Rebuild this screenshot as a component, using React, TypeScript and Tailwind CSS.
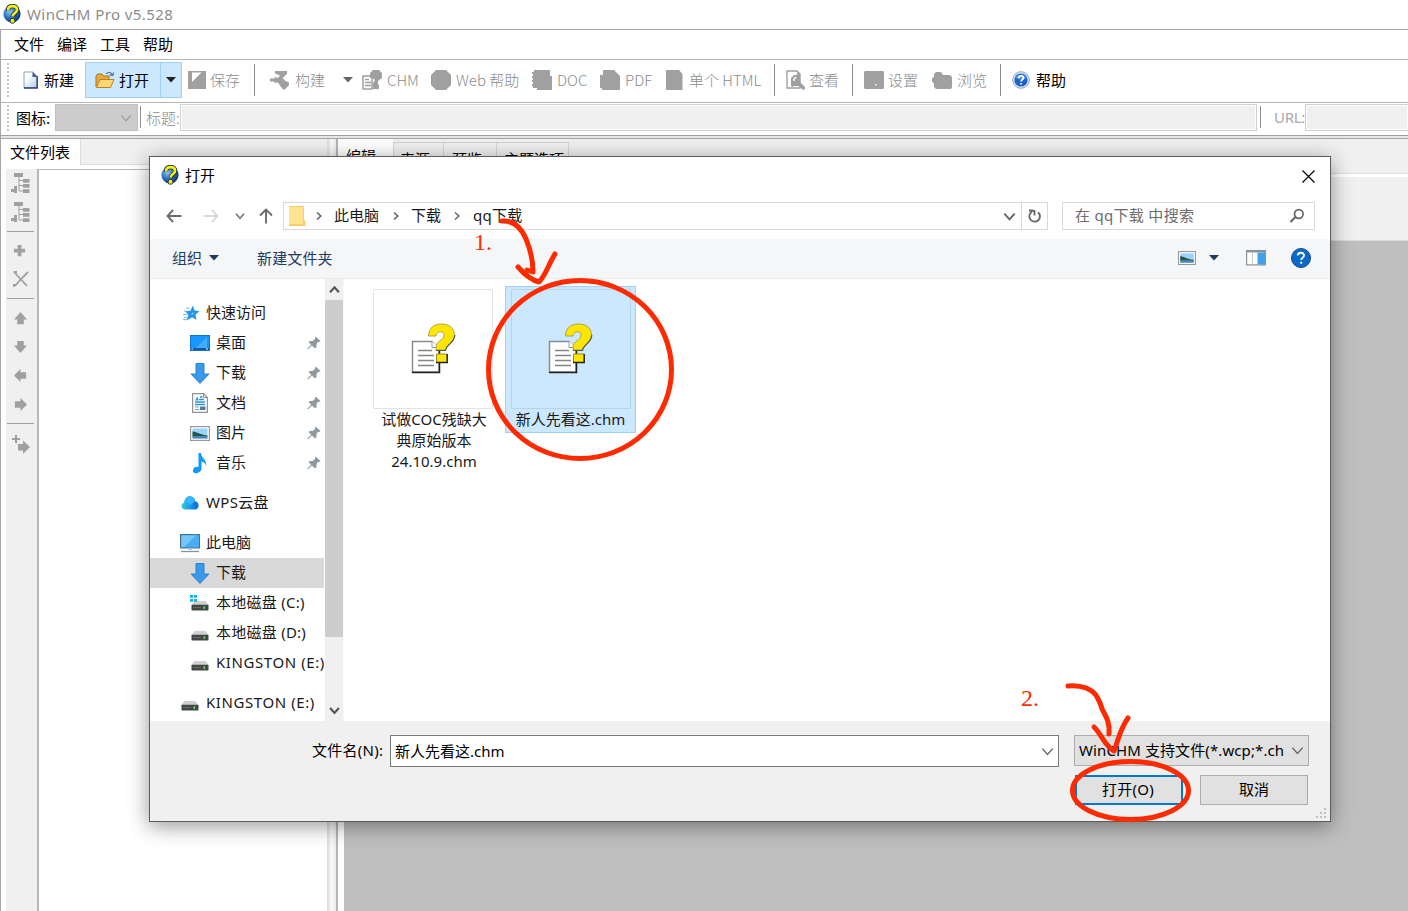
import type { ReactNode } from "react";

const ui = "font-['Noto_Sans','Noto_Sans_CJK_SC',sans-serif]";
const cjk = "font-['Noto_Sans_CJK_SC',sans-serif]";

type IconProps = { className?: string };

function AppLogo({ className = "" }: IconProps) {
  return (
    <svg className={className} width="18" height="20" viewBox="0 0 18 20">
      <defs>
        <radialGradient id="globe" cx="35%" cy="35%" r="70%">
          <stop offset="0" stopColor="#8fc3f5" />
          <stop offset="0.5" stopColor="#2f74c4" />
          <stop offset="1" stopColor="#0d3277" />
        </radialGradient>
      </defs>
      <circle cx="9" cy="10" r="8.6" fill="url(#globe)" />
      <path d="M5.2 6.6C4.6 3.2 7 2 9.5 2c3 0 4.700 1.600 4.700 3.900 0 3-4.200 3.300-4.400 7" fill="none" stroke="#263a3a" strokeWidth="4.400" />
      <path d="M5.200 6.400C4.600 3.200 7 2.200 9.500 2.200c3 0 4.500 1.500 4.500 3.700 0 3-4.200 3.300-4.400 6.600" fill="none" stroke="#f3ee13" strokeWidth="2.700" />
      <rect x="7.200" y="14.500" width="4.600" height="4.600" rx="1.500" fill="#f3ee13" stroke="#263a3a" strokeWidth="1" />
    </svg>
  );
}

function NewIcon() {
  return (
    <svg width="16" height="18" viewBox="0 0 16 18">
      <defs>
        <linearGradient id="sheet" x1="0" x2="1" y1="0" y2="1">
          <stop offset="0.3" stopColor="#fff" />
          <stop offset="1" stopColor="#b5cbe4" />
        </linearGradient>
      </defs>
      <path d="M1 1H10L14 5.500V16.500H1Z" fill="url(#sheet)" stroke="#8aa0bd" />
      <path d="M14.200 5V17H1" fill="none" stroke="#27456e" strokeWidth="1.400" />
      <path d="M9.500 1V6H14.500Z" fill="#3f5d86" />
    </svg>
  );
}

function OpenIcon() {
  return (
    <svg width="20" height="18" viewBox="0 0 20 18">
      <path d="M1 16V5L2.500 3H7L8.500 5H14V8" fill="#e3aa3d" stroke="#a9731c" />
      <path d="M1.500 16.500L5 8.500H19L15.500 16.500Z" fill="#fcd674" stroke="#bb8320" />
      <path d="M11 3C13 .5 16 .7 17.500 4M18.800 1.500L17.700 4.600L14.500 3.800" fill="none" stroke="#52749c" strokeWidth="1.200" />
    </svg>
  );
}

function SaveIcon() {
  return (
    <svg width="18" height="18" viewBox="0 0 18 18">
      <path d="M0 0H18V18H0Z" fill="#a0a0a0" />
      <path d="M4 1.500H13.500L4 11Z" fill="#fff" />
    </svg>
  );
}

function BuildIcon() {
  return (
    <svg width="20" height="19" viewBox="0 0 20 19" fill="#a0a0a0">
      <path d="M5 0H17V3L12.500 7L15.500 10L19 11.500V14L15 18.500H13L10 14.500L8 11.500L4.500 12V10.500H0V7.500H4.500V6L8 7L10 4.500L5 2.500Z" />
    </svg>
  );
}

function ChmIcon() {
  return (
    <svg width="20" height="20" viewBox="0 0 20 20">
      <path d="M1 6H10V19H1Z" fill="#fff" stroke="#a0a0a0" strokeWidth="1.500" />
      <path d="M3 9.500H7M3 12.500H9M3 15.500H9" stroke="#a0a0a0" strokeWidth="1.300" />
      <path d="M8 3L11 0H17L20 3V8L16 11V14L17 15V19H11V13L13 10L10 8H8Z" fill="#a0a0a0" />
    </svg>
  );
}

function WebIcon() {
  return (
    <svg width="20" height="20" viewBox="0 0 20 20" fill="#a0a0a0">
      <path d="M5 0H15L20 5V15L15 20H5L0 15V5Z" />
    </svg>
  );
}

function DocIcon() {
  return (
    <svg width="20" height="20" viewBox="0 0 20 20" fill="#a0a0a0">
      <path d="M2 0H18V6H20V20H5V18H1V16H0V14H1V12H0V10H1V8H0V6H1V4H0V2H2Z" />
    </svg>
  );
}

function PdfIcon() {
  return (
    <svg width="20" height="20" viewBox="0 0 20 20" fill="#a0a0a0">
      <path d="M3 0H14L20 6V20H2V18H0V5H3Z" />
    </svg>
  );
}

function HtmlIcon() {
  return (
    <svg width="17" height="20" viewBox="0 0 17 20" fill="#a0a0a0">
      <path d="M0 0H13L16.500 4V20H0Z" />
    </svg>
  );
}

function ViewIcon() {
  return (
    <svg width="20" height="20" viewBox="0 0 20 20">
      <path d="M1 1H11L14 4V18H1Z" fill="#fff" stroke="#a0a0a0" strokeWidth="1.400" />
      <path d="M5 16V8L8 5H11V2L14 4V12L19 17V19L17 20L13 16H8L6 17Z" fill="#a0a0a0" />
      <path d="M8 11V9L10 7" fill="none" stroke="#fff" strokeWidth="1.500" />
    </svg>
  );
}

function SettingsIcon() {
  return (
    <svg width="20" height="18" viewBox="0 0 20 18">
      <path d="M1 0H19L20 1V17L19 18H1L0 17V1Z" fill="#a0a0a0" />
      <rect x="11" y="13" width="1.500" height="1.500" fill="#fff" />
    </svg>
  );
}

function BrowseIcon() {
  return (
    <svg width="20" height="17" viewBox="0 0 20 17" fill="#a0a0a0">
      <path d="M2 2L4 0H9L11 3H18L20 5V15L19 17H4L2 15V12L0 9V6L2 5Z" />
    </svg>
  );
}

function HelpBall() {
  return (
    <svg width="18" height="18" viewBox="0 0 18 18">
      <circle cx="9" cy="9" r="8.300" fill="#dfe8f1" stroke="#8fa5bd" />
      <circle cx="9" cy="9" r="6.600" fill="#1b63c8" />
      <path d="M3.500 7A6 6 0 0 1 14.500 7Q9 10 3.500 7" fill="#5b9be6" />
      <path d="M6.700 7C6.700 3.800 11.600 4.200 11.400 7C11.300 8.600 9.200 8.700 9.100 10.500M9.100 12V13.600" fill="none" stroke="#fff" strokeWidth="1.700" />
    </svg>
  );
}

function Caret({ color = "#666", className = "" }: { color?: string; className?: string }) {
  return (
    <svg className={className} width="10" height="6" viewBox="0 0 10 6">
      <path d="M0 0H10L5 5.600Z" fill={color} />
    </svg>
  );
}

function Chevron({ dir, size = 10, color = "#666", weight = 1.600 }: { dir: "up" | "down" | "right"; size?: number; color?: string; weight?: number }) {
  const d = { up: "M1 7.500L5 3L9 7.500", down: "M1 2.800L5 7.200L9 2.800", right: "M3 1.500L6.800 5L3 8.500" }[dir];
  return (
    <svg width={size} height={size} viewBox="0 0 10 10">
      <path d={d} fill="none" stroke={color} strokeWidth={weight} />
    </svg>
  );
}

function Tool({ width, iconWidth, icon, label, active }: { width: string; iconWidth: string; icon: ReactNode; label: string; active?: boolean }) {
  return (
    <div className={`flex h-[36px] shrink-0 items-center ${width}`}>
      <span className={`shrink-0 ${iconWidth}`}>{icon}</span>
      <span className={`whitespace-nowrap ${active ? "text-black" : "font-light text-[#8c8c8c]"}`}>{label}</span>
    </div>
  );
}

function Divider({ margin }: { margin: string }) {
  return <div className={`h-[32px] w-px shrink-0 bg-[#8c8c8c] ${margin}`} />;
}

function Grip({ count, className }: { count: number; className: string }) {
  return (
    <div className={`flex w-[3px] shrink-0 flex-col gap-[2px] ${className}`}>
      {Array.from({ length: count }, (_, i) => (
        <span key={i} className="size-[2px] bg-[#c4c4c4]" />
      ))}
    </div>
  );
}

function Toolbar() {
  return (
    <div className={`flex h-[43px] shrink-0 items-start border-b border-[#b4b4b4] pt-[2px] text-[15px] leading-[20px] ${cjk}`}>
      <Grip count={9} className="ml-[7px] mr-[13px] mt-[1px]" />
      <Tool width="w-[62px]" iconWidth="w-[21px]" icon={<NewIcon />} label="新建" active />
      <div className="flex h-[36px] w-[97px] shrink-0 items-center border border-[#99d1ff] bg-[#cce8ff]">
        <span className="ml-[9px] w-[24px]"><OpenIcon /></span>
        <span className="w-[41px] text-black">打开</span>
        <span className="flex h-full grow items-center justify-center border-l border-[#99d1ff]"><Caret color="#222" /></span>
      </div>
      <Tool width="ml-[6px] w-[66px]" iconWidth="w-[22px]" icon={<SaveIcon />} label="保存" />
      <Divider margin="mt-[2px]" />
      <Tool width="ml-[15px] w-[73px]" iconWidth="w-[25px]" icon={<BuildIcon />} label="构建" />
      <div className="flex h-[36px] w-[19px] shrink-0 items-center"><Caret /></div>
      <Tool width="w-[69px]" iconWidth="w-[25px]" icon={<ChmIcon />} label="CHM" />
      <Tool width="w-[101px]" iconWidth="w-[25px]" icon={<WebIcon />} label="Web 帮助" />
      <Tool width="w-[68px]" iconWidth="w-[25px]" icon={<DocIcon />} label="DOC" />
      <Tool width="w-[66px]" iconWidth="w-[25px]" icon={<PdfIcon />} label="PDF" />
      <Tool width="w-[108px]" iconWidth="w-[23px]" icon={<HtmlIcon />} label="单个 HTML" />
      <Divider margin="mt-[2px]" />
      <Tool width="ml-[11px] w-[66px]" iconWidth="w-[23px]" icon={<ViewIcon />} label="查看" />
      <Divider margin="mt-[2px]" />
      <Tool width="ml-[11px] w-[68px]" iconWidth="w-[24px]" icon={<SettingsIcon />} label="设置" />
      <Tool width="w-[68px]" iconWidth="w-[25px]" icon={<BrowseIcon />} label="浏览" />
      <Divider margin="mt-[2px]" />
      <Tool width="ml-[11px] w-[66px]" iconWidth="w-[24px]" icon={<HelpBall />} label="帮助" active />
    </div>
  );
}

function TitleFields() {
  return (
    <div className={`flex h-[33px] shrink-0 items-start border-b border-[#9f9f9f] pt-px text-[15px] leading-[27px] ${cjk}`}>
      <Grip count={7} className="ml-[7px] mr-[6px] mt-[1px]" />
      <span className="w-[39px] shrink-0 text-black">图标:</span>
      <div className="flex h-[27px] w-[83px] shrink-0 items-center justify-end border border-[#c0c0c0] bg-[#cccccc] pr-[5px]">
        <Chevron dir="down" size={12} color="#a0a0a0" weight={1.200} />
      </div>
      <div className="ml-[2px] mt-[2px] h-[22px] w-px shrink-0 bg-[#8c8c8c]" />
      <span className="ml-[5px] w-[34px] shrink-0 whitespace-nowrap font-light text-[#8c8c8c]">标题:</span>
      <div className="h-[27px] w-[1077px] shrink-0 border border-[#d0d0d0] bg-[#f0f0f0] shadow-[inset_0_0_0_1px_#fff]" />
      <div className="ml-[3px] mt-[2px] h-[22px] w-px shrink-0 bg-[#8c8c8c]" />
      <span className={`ml-[13px] w-[31px] shrink-0 whitespace-nowrap tracking-[-0.3px] text-[#a8a8a8] ${ui}`}>URL:</span>
      <div className="h-[27px] grow border border-r-0 border-[#d0d0d0] bg-[#f0f0f0] shadow-[inset_0_0_0_1px_#fff]" />
    </div>
  );
}

function TreeNodeIcon() {
  return (
    <svg width="20" height="21" viewBox="0 0 20 21" fill="#a0a0a0">
      <path d="M3 0H12V4H3ZM12 6H18.500V9.800H12ZM12 11H18.500V14.800H12ZM12 16.200H18.500V20H12Z" />
      <path d="M8 3V18M8 7.500H12M8 12.500H12M8 18H12" stroke="#a0a0a0" fill="none" />
      <path d="M0 16H3V13L6 13V20H3V19H0Z" />
    </svg>
  );
}

function SideIcon({ d, size = 16 }: { d: string; size?: number }) {
  return (
    <svg width={size} height={size} viewBox="0 0 16 16">
      <path d={d} fill="#a0a0a0" />
    </svg>
  );
}

const arrowUp = "M8 1L15 9H11.500V14H4.500V9H1Z";
const arrowDown = "M8 15L15 7H11.500V2H4.500V7H1Z";
const arrowLeft = "M1 8L8 1V4.500H14V11.500H8V15Z";
const arrowRight = "M15 8L8 1V4.500H2V11.500H8V15Z";

function SideCell({ height, children, line }: { height: string; children: ReactNode; line?: boolean }) {
  return (
    <div className={`flex w-[27px] shrink-0 items-center justify-center ${height} ${line ? "border-b border-[#a0a0a0]" : ""}`}>{children}</div>
  );
}

function LeftPanel() {
  return (
    <div className={`flex w-[325px] shrink-0 flex-col ${cjk}`}>
      <div className="flex h-[26px] w-[328px] shrink-0 text-[15px]">
        <div className="w-[78px] bg-white pl-[8px] leading-[25px] text-black">文件列表</div>
        <div className="grow border-b border-l border-[#dcdcdc] bg-[#f0f0f0]" />
      </div>
      <div className="mt-[4px] flex grow">
        <div className="ml-[4px] flex w-[31px] flex-col items-center bg-[#f0f0f0] pr-[2px]">
          <SideCell height="h-[29px]"><TreeNodeIcon /></SideCell>
          <SideCell height="h-[34px] pb-[5px]" line><TreeNodeIcon /></SideCell>
          <SideCell height="h-[37px] pr-[2px]"><SideIcon d="M6 2H10V6H14V10H10V14H6V10H2V6H6Z" size={15} /></SideCell>
          <SideCell height="h-[30px] pb-[9px]" line>
            <svg width="16" height="16" viewBox="0 0 16 16">
              <path d="M1 1L14 15M15 1L8 8L2 15" fill="none" stroke="#a0a0a0" strokeWidth="1.800" />
              <path d="M0 0H4V3ZM0 13H4L1 16H0Z" fill="#a0a0a0" />
            </svg>
          </SideCell>
          <SideCell height="h-[37px] pt-[2px]"><SideIcon d={arrowUp} size={15} /></SideCell>
          <SideCell height="h-[20px]"><SideIcon d={arrowDown} size={15} /></SideCell>
          <SideCell height="h-[38px]"><SideIcon d={arrowLeft} size={15} /></SideCell>
          <SideCell height="h-[30px] pb-[9px]" line><SideIcon d={arrowRight} size={15} /></SideCell>
          <SideCell height="h-[41px] pl-[3px]">
            <svg width="20" height="20" viewBox="0 0 20 20" fill="#a0a0a0">
              <path d="M3 0H5V3H8V5H5V8H3V5H0V3H3ZM6 9H11V5.500L18 12L11 19V15.500H6Z" />
            </svg>
          </SideCell>
        </div>
        <div className="grow border-l-2 border-t border-[#b8b8b8] bg-white" />
      </div>
    </div>
  );
}

function EditorTab({ label, width }: { label: string; width: string }) {
  return <div className={`mt-[3px] h-[31px] border-l border-t border-[#d4d4d4] bg-[#f0f0f0] leading-[31px] ${width}`}>{label}</div>;
}

function EditorPanel() {
  return (
    <div className={`flex grow flex-col border-l-2 border-[#b4b4b4] text-[15px] text-black ${cjk}`}>
      <div className="flex h-[35px] shrink-0 border-b border-[#dedede] bg-[#f0f0f0]">
        <div className="h-[34px] w-[55px] bg-white pl-[8px] leading-[33px]">编辑</div>
        <EditorTab label="来源" width="w-[50px] pl-[6px]" />
        <EditorTab label="预览" width="w-[53px] pl-[8px]" />
        <EditorTab label="主题选项" width="w-[73px] border-r pl-[7px]" />
      </div>
      <div className="flex grow flex-col border-l-[6px] border-white pt-[3px]">
        <div className="h-[64px] shrink-0 border-b border-[#dadada] bg-[#f0f0f0]" />
        <div className="grow bg-[#bfbfbf]" />
      </div>
    </div>
  );
}

function DesktopIcon() {
  return (
    <svg width="20" height="16" viewBox="0 0 20 16">
      <rect x=".5" y=".5" width="19" height="15" fill="#1597fb" stroke="#1573c4" />
      <path d="M6 13L17 2V13Z" fill="#42adff" />
      <path d="M1 14H19" stroke="#0b5ba8" strokeWidth="2" />
      <path d="M1.500 14H3M16 14H18" stroke="#fff" />
    </svg>
  );
}

function DownloadIcon() {
  return (
    <svg width="20" height="21" viewBox="0 0 20 21">
      <path d="M6 .5H14V11H19L10 20.500L1 11H6Z" fill="#3a9ae8" stroke="#2b84d0" />
    </svg>
  );
}

function DocumentIcon() {
  return (
    <svg width="20" height="20" viewBox="0 0 20 20">
      <path d="M2.600 .6H13.500L17.400 4.500V19.400H2.600Z" fill="#fff" stroke="#929292" strokeWidth="1.200" />
      <path d="M13.500 .6V4.500H17.400" fill="none" stroke="#929292" />
      <path d="M10 4H12.500M9 6.500H14M5 9H15M5 11.500H15" stroke="#2e93dd" strokeWidth="1.300" />
      <path d="M5 7.500L7.500 3.500L8.500 7.500Z" fill="#2e93dd" />
      <path d="M5 14H9M5 16.500H9" stroke="#8a9aab" />
      <path d="M10 13.500H15.500V17H10Z" fill="#4b7ba8" />
    </svg>
  );
}

function PictureIcon({ small }: { small?: boolean }) {
  return (
    <svg width={small ? 18 : 20} height={small ? 14 : 15} viewBox="0 0 20 15" preserveAspectRatio="none">
      <rect x=".6" y=".6" width="18.800" height="13.800" fill="#fff" stroke="#999" strokeWidth="1.200" />
      <rect x="2.500" y="2.500" width="15" height="10" fill="#9bd2fa" />
      <path d="M2.500 5.500C6 5.500 8 8 17.500 9.500V10.500H2.500Z" fill="#24544f" />
      <path d="M2.500 10H17.500V12.500H2.500Z" fill="#4c86b0" />
    </svg>
  );
}

function MusicIcon() {
  return (
    <svg width="20" height="21" viewBox="0 0 20 21">
      <path d="M8.500 0H11C11 5 17 6 16 13C15.500 9.500 13 9 11.500 8.500V16C11 20 4 22 3 18.500C2.500 14.500 6 13 8.500 14Z" fill="#109bfa" />
    </svg>
  );
}

function StarIcon() {
  return (
    <svg width="18" height="17" viewBox="0 0 18 17">
      <path d="M10.500 0L12.200 5.300L17.500 6L13.200 9.600L14.300 15.500L9.700 12.600L4 16L5.800 10.200L2.500 6L7.800 5.600Z" fill="#2296ea" />
      <path d="M3 3H7M1 6H4M0 9.500H5M1 12.500H5M0 15H4" stroke="#67baf2" />
      <path d="M9.500 7.500L12 8.500L9 10Z" fill="#8fd2ff" />
    </svg>
  );
}

function CloudIcon() {
  return (
    <svg width="18" height="14" viewBox="0 0 18 14">
      <defs>
        <linearGradient id="cloud" x1="0" x2="1">
          <stop offset="0" stopColor="#2cd6c8" />
          <stop offset="0.500" stopColor="#1c95ee" />
          <stop offset="1" stopColor="#0867d4" />
        </linearGradient>
      </defs>
      <path d="M4 13.500C0 13.500-1 8 3.300 6.500C3.500 2 7 .2 9 .3C12 .4 14 3 14 5C19 6 18.500 13.500 14 13.500Z" fill="url(#cloud)" />
      <path d="M3.300 6.500C4 2 7 .2 9 .3C12 .4 14 3 14 5L9 9.500C7 6 5 6 3.300 6.500Z" fill="#35b7ff" />
    </svg>
  );
}

function PcIcon() {
  return (
    <svg width="20" height="19" viewBox="0 0 20 19">
      <rect x=".5" y=".5" width="19" height="13.500" fill="#49adf5" stroke="#48718f" />
      <path d="M4 13L16 1.500H1.500V13Z" fill="#75c6fb" />
      <path d="M8.500 14.500H12V16H8.500Z" fill="#b9c5ce" />
      <path d="M1 17.500H19" stroke="#8097a8" strokeWidth="1.300" />
    </svg>
  );
}

function DriveIcon({ system }: { system?: boolean }) {
  return (
    <svg width="20" height="18" viewBox="0 0 20 18">
      <path d="M4.500 7H15.500L18.500 11H1.500Z" fill="#d0d0d0" />
      <rect x="1.500" y="10.800" width="17" height="5.600" rx=".6" fill="#424744" />
      <path d="M3 13.600H11" stroke="#6a6f6c" />
      <rect x="13.500" y="12.400" width="1.600" height="2.400" fill="#5af06b" />
      {system && <path d="M0 1H3V3.700H0ZM4 1H7V3.700H4ZM0 5H3V7.700H0ZM4 5H7V7.700H4Z" fill="#12b4f2" />}
    </svg>
  );
}

function Pin() {
  return (
    <svg width="14" height="14" viewBox="0 0 14 14">
      <path d="M8.500 .5L13.500 5L12 6L10.500 6.300L9.500 8.500V11L8 12.500L5 9.500L1 13.500L.3 12.800L4.200 8.800L1.500 6L3 5H5.500L7.700 3.300Z" fill="#8e99a1" />
    </svg>
  );
}

function TreeRow({ icon, label, nested, pinned, selected, gap, iconClass = "", labelClass = "" }: { icon: ReactNode; label: string; nested?: boolean; pinned?: boolean; selected?: boolean; gap?: boolean; iconClass?: string; labelClass?: string }) {
  return (
    <div className={`flex h-[30px] w-[174px] shrink-0 items-center ${nested ? "pl-[40px]" : "pl-[30px]"} ${selected ? "bg-[#d9d9d9]" : ""} ${gap ? "mt-[10px]" : ""}`}>
      <span className={`flex w-[20px] shrink-0 justify-center ${iconClass}`}>{icon}</span>
      <span className={`ml-[6px] grow whitespace-nowrap pb-[2px] ${labelClass}`}>{label}</span>
      {pinned && <span className="mr-[3px] shrink-0"><Pin /></span>}
    </div>
  );
}

function NavTree() {
  return (
    <div className="flex w-[175px] shrink-0 flex-col pt-[19px]">
      <TreeRow icon={<StarIcon />} label="快速访问" iconClass="pl-[3px]" />
      <TreeRow icon={<DesktopIcon />} label="桌面" nested pinned />
      <TreeRow icon={<DownloadIcon />} label="下载" nested pinned />
      <TreeRow icon={<DocumentIcon />} label="文档" nested pinned />
      <TreeRow icon={<PictureIcon />} label="图片" nested pinned />
      <TreeRow icon={<MusicIcon />} label="音乐" nested pinned />
      <TreeRow icon={<CloudIcon />} label="WPS云盘" labelClass="tracking-[0.3px]" gap />
      <TreeRow icon={<PcIcon />} label="此电脑" gap />
      <TreeRow icon={<DownloadIcon />} label="下载" nested selected />
      <TreeRow icon={<DriveIcon system />} label="本地磁盘 (C:)" labelClass="tracking-[0.25px]" nested />
      <TreeRow icon={<DriveIcon />} label="本地磁盘 (D:)" labelClass="tracking-[0.25px]" nested />
      <TreeRow icon={<DriveIcon />} label="KINGSTON (E:)" labelClass="tracking-[0.58px]" nested />
      <TreeRow icon={<DriveIcon />} label="KINGSTON (E:)" labelClass="tracking-[0.58px]" gap />
    </div>
  );
}

function ChmFile() {
  return (
    <svg width="48" height="52" viewBox="0 0 48 52">
      <path d="M2.500 18.500H22L29 25V49H2.500Z" fill="#fff" stroke="#8c8c8c" strokeWidth="1.500" />
      <path d="M29.500 24V49.500H2" fill="none" stroke="#222" strokeWidth="1.500" />
      <path d="M22 18V24.500H29" fill="#fff" stroke="#999" />
      <path d="M8 27.500H22M8 32.500H24M8 37.500H24M8 42.500H24" stroke="#858585" strokeWidth="1.500" />
      <path d="M19 13H26C26 8 34 7 34 12C34 18 26 17 26 25V27H35.500C36 21 44.500 20 44.500 12C44.500 5 39 1 31.500 1C24 1 18.500 5 18.500 13Z" fill="#ffe600" stroke="#a08f30" strokeWidth=".8" />
      <path d="M26 27.500H35.500C36 21.500 44.800 20 44.800 12" fill="none" stroke="#555" strokeWidth="1.200" />
      <rect x="26" y="31" width="11" height="8.500" fill="#ffe600" />
      <path d="M26.500 39.500V31H37" fill="none" stroke="#9b8b2c" />
      <path d="M26 39.500H37.200V31" fill="none" stroke="#222" strokeWidth="1.500" />
    </svg>
  );
}

function FileTile({ lines, selected }: { lines: string[]; selected?: boolean }) {
  return (
    <div className={`flex w-[131px] flex-col items-center border pt-[2px] ${selected ? "h-[147px] border-[#99d1ff] bg-[#cce8ff]" : "h-[190px] border-transparent"}`}>
      <div className={`flex h-[120px] w-[120px] shrink-0 items-center justify-center rounded-[1px] border ${selected ? "border-[#b5d3e9]" : "border-[#e4e4e4] bg-white pl-[2px]"}`}>
        <ChmFile />
      </div>
      <div className={`text-center leading-[21px] ${selected ? "" : "pl-[3px]"}`}>
        {lines.map((line) => (
          <div key={line} className="whitespace-nowrap">{line}</div>
        ))}
      </div>
    </div>
  );
}

function NavArrow({ d, color }: { d: string; color: string }) {
  return (
    <svg width="16" height="16" viewBox="0 0 16 16">
      <path d={d} fill="none" stroke={color} strokeWidth="1.900" />
    </svg>
  );
}

function AddressRow() {
  return (
    <div className="flex h-[28px] shrink-0 items-center">
      <span className="ml-[16px] w-[37px]"><NavArrow d="M15.500 8H1.500M7 2L1.500 8L7 14" color="#6b6b6b" /></span>
      <span className="w-[32px]"><NavArrow d="M.5 8H14.500M9 2L14.500 8L9 14" color="#d8d8d8" /></span>
      <span className="flex w-[23px]"><Chevron dir="down" color="#777" /></span>
      <span className="w-[25px]"><NavArrow d="M8 15.500V2M2 7.500L8 1.500L14 7.500" color="#6b6b6b" /></span>
      <div className="flex h-[28px] w-[765px] shrink-0 items-center border border-[#d9d9d9]">
        <svg className="ml-[4px]" width="18" height="20" viewBox="0 0 18 20">
          <path d="M1 0H16V14L17.500 15V20H1Z" fill="#f7cf66" />
          <path d="M1 1H15V18H1Z" fill="#ffe292" />
        </svg>
        <span className="ml-[8px] flex w-[20px] items-center"><Chevron dir="right" /></span>
        <span className="w-[57px] pb-[2px]">此电脑</span>
        <span className="flex w-[20px]"><Chevron dir="right" /></span>
        <span className="w-[41px] pb-[2px]">下载</span>
        <span className="flex w-[21px]"><Chevron dir="right" /></span>
        <span className="grow pb-[2px] tracking-[0.3px]">qq下载</span>
        <span className="mr-[5px] flex"><Chevron dir="down" size={13} weight={1.500} /></span>
        <span className="flex h-full w-[26px] items-center justify-center border-l border-[#d9d9d9]">
          <svg width="14" height="15" viewBox="0 0 14 15">
            <path d="M3.500 3.300A5.300 5.300 0 1 0 9.500 2.800" fill="none" stroke="#666" strokeWidth="1.800" transform="matrix(-1 0 0 1 13.500 0)" />
            <path d="M5 1.500H1M2 1.800H6.500V6.500" fill="none" stroke="#666" strokeWidth="1.800" />
          </svg>
        </span>
      </div>
      <div className="ml-[14px] flex h-[28px] w-[253px] items-center border border-[#d9d9d9] pl-[12px] pr-[9px] text-[#6d6d6d]">
        <span className="grow pb-[2px] tracking-[0.3px]">在 qq下载 中搜索</span>
        <svg width="16" height="16" viewBox="0 0 16 16">
          <circle cx="9.800" cy="6" r="4.300" fill="none" stroke="#666" strokeWidth="1.700" />
          <path d="M6.500 9L1.500 14" stroke="#666" strokeWidth="2.200" />
        </svg>
      </div>
    </div>
  );
}

function CommandRow() {
  return (
    <div className="mt-[9px] flex h-[40px] shrink-0 items-center border-b border-[#ebebeb] bg-[#f5f6f7] pb-[2px] text-[#1e3a5f]">
      <span className="ml-[22px] w-[37px]">组织</span>
      <Caret color="#1e3a5f" />
      <span className="ml-[38px] grow tracking-[0.15px]">新建文件夹</span>
      <PictureIcon small />
      <Caret color="#1e3a5f" className="ml-[13px]" />
      <svg className="ml-[27px]" width="20" height="16" viewBox="0 0 20 16">
        <rect x=".6" y=".6" width="18.800" height="14.300" fill="#fff" stroke="#8b9196" strokeWidth="1.200" />
        <path d="M1 1.500H19" stroke="#8b9196" strokeWidth="1.800" />
        <path d="M6.500 2V14.500" stroke="#ccc" />
        <rect x="11.500" y="2.500" width="7.500" height="12" fill="#43a0e8" />
      </svg>
      <svg className="ml-[25px] mr-[19px]" width="20" height="20" viewBox="0 0 20 20">
        <circle cx="10" cy="10" r="9.500" fill="#0a6acb" stroke="#134b8c" />
        <path d="M6.800 7.400C7 3.600 13.200 3.900 13 7.600C12.900 9.600 10.300 9.700 10.200 12M10.200 13.800V15.800" fill="none" stroke="#fff" strokeWidth="1.900" />
      </svg>
    </div>
  );
}

function DialogFooter() {
  return (
    <div className="flex h-[100px] shrink-0 items-start bg-[#f0f0f0] pt-[14px] text-black">
      <span className="ml-[162px] w-[78px] shrink-0 whitespace-nowrap leading-[31px] tracking-[0.25px]">文件名(N):</span>
      <div className="flex h-[32px] w-[669px] shrink-0 items-center border border-[#7a7a7a] bg-white pl-[4px] pr-[4px]">
        <span className="grow">新人先看这.chm</span>
        <Chevron dir="down" size={13} weight={1.100} />
      </div>
      <div className="ml-[15px] flex w-[235px] flex-col">
        <div className="flex h-[31px] items-center border border-[#adadad] bg-[#e1e1e1] pl-[4px] pr-[4px]">
          <span className="w-[205px] shrink-0 overflow-hidden whitespace-nowrap pb-px tracking-[0.1px]">WinCHM 支持文件(*.wcp;*.chm)</span>
          <span className="ml-[7px] shrink-0"><Chevron dir="down" size={13} weight={1.100} /></span>
        </div>
        <div className="mt-[9px] flex pl-[1px]">
          <div className="h-[30px] w-[108px] border-2 border-[#0078d7] bg-[#e1e1e1] pr-[2px] text-center leading-[25px] tracking-[0.3px]">打开(O)</div>
          <div className="ml-[17px] h-[30px] w-[108px] border border-[#adadad] bg-[#e1e1e1] text-center leading-[27px]">取消</div>
        </div>
      </div>
      <svg className="ml-[7px] mt-[73px] shrink-0" width="12" height="12" viewBox="0 0 12 12" fill="#bfbfbf">
        <path d="M8 0H10V2H8ZM4 4H6V6H4ZM8 4H10V6H8ZM0 8H2V10H0ZM4 8H6V10H4ZM8 8H10V10H8Z" />
      </svg>
    </div>
  );
}

function OpenDialog() {
  return (
    <div className={`absolute left-[149px] top-[156px] flex h-[666px] w-[1182px] flex-col border border-[#5c5c5c] bg-white text-[15px] leading-[20px] text-[#1a1a1a] shadow-[0_4px_20px_rgba(0,0,0,0.42)] ${ui}`}>
      <div className="flex h-[45px] shrink-0 items-center pb-[9px] text-black">
        <AppLogo className="ml-[11px] mr-[6px]" />
        <span className="grow pb-px">打开</span>
        <svg className="mr-[15px] mt-[2px]" width="13" height="13" viewBox="0 0 13 13">
          <path d="M.5 .5L12.500 12.500M12.500 .5L.5 12.500" stroke="#000" strokeWidth="1.200" />
        </svg>
      </div>
      <AddressRow />
      <CommandRow />
      <div className="flex h-[442px] shrink-0">
        <NavTree />
        <div className="flex w-[19px] shrink-0 flex-col items-center border-r border-[#fafafa] bg-[#f0f0f0]">
          <span className="flex h-[21px] items-center"><Chevron dir="up" size={11} color="#555" weight={2} /></span>
          <div className="h-[337px] w-full bg-[#cdcdcd]" />
          <span className="mt-auto flex h-[21px] items-center"><Chevron dir="down" size={11} color="#555" weight={2} /></span>
        </div>
        <div className="flex items-start gap-[7px] pl-[23px] pt-[7px]">
          <FileTile lines={["试做COC残缺大", "典原始版本", "24.10.9.chm"]} />
          <FileTile lines={["新人先看这.chm"]} selected />
        </div>
      </div>
      <DialogFooter />
    </div>
  );
}

function Annotations() {
  return (
    <div className="pointer-events-none absolute inset-0 font-['Liberation_Serif',serif] text-[24px] leading-[24px] text-[#ff2a00]">
      <svg className="absolute inset-0" width="1408" height="911" viewBox="0 0 1408 911" fill="none" stroke="#ff2a00" strokeWidth="5" strokeLinecap="round" strokeLinejoin="round">
        <ellipse cx="580" cy="369.500" rx="91.500" ry="89" />
        <path d="M502 221C516 220 523 232 526 239C531 251 533 263 533 272L527 270M518 267C525 275 531 280 539 282C546 275 549 263 555 254" />
        <ellipse cx="1130.500" cy="790.500" rx="58" ry="29" />
        <path d="M1068 686C1082 685 1090 688 1096 695C1099 701 1101 704 1102 709C1107 718 1110 724 1109 734M1094 727C1102 735 1105 746 1114 751C1118 741 1120 729 1128 718" />
      </svg>
      <span className="absolute left-[474px] top-[230px]">1.</span>
      <span className="absolute left-[1021px] top-[686px]">2.</span>
    </div>
  );
}

export default function App() {
  return (
    <div className="relative flex h-[911px] w-[1408px] flex-col overflow-hidden bg-white">
      <div className={`flex h-[29px] shrink-0 items-center pl-[3px] text-[15px] tracking-[0.42px] text-[#8c8c8c] ${ui}`}>
        <AppLogo className="mb-px mr-[6px]" />
        WinCHM Pro v5.528
      </div>
      <div className="flex grow flex-col border-l border-t border-[#a6a6a6]">
        <div className={`flex h-[30px] shrink-0 items-center gap-[13px] border-b border-[#b4b4b4] pl-[13px] text-[15px] text-black ${cjk}`}>
          <span>文件</span>
          <span>编译</span>
          <span>工具</span>
          <span>帮助</span>
        </div>
        <div className="-ml-px flex flex-col">
          <Toolbar />
          <TitleFields />
        </div>
        <div className="h-[3px] shrink-0 border-b border-[#a6a6a6] bg-[#e6e6e6]" />
        <div className="flex grow pl-px">
          <LeftPanel />
          <div className="w-[9px] shrink-0 border-l-2 border-[#e0e0e0] bg-[#f0f0f0]">
            <div className="ml-[2px] h-full w-[2px] bg-[#fafafa]" />
          </div>
          <EditorPanel />
        </div>
      </div>
      <OpenDialog />
      <Annotations />
    </div>
  );
}
